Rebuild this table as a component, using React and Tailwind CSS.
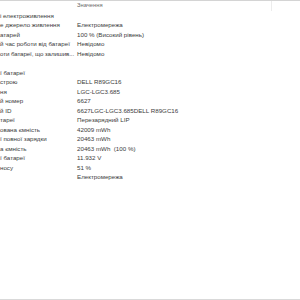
export default function App() {
  const rows = [
    ["і електроживлення", ""],
    ["е джерело живлення", "Електромережа"],
    ["атарей", "100 % (Високий рівень)"],
    ["й час роботи від батареї", "Невідомо"],
    ["оти батареї, що залишив...", "Невідомо"],
    ["", ""],
    ["ї батареї", ""],
    ["строю", "DELL R89GC16"],
    ["ня", "LGC-LGC3.685"],
    ["й номер", "6627"],
    ["й ID", "6627LGC-LGC3.685DELL R89GC16"],
    ["тареї", "Перезарядний LIP"],
    ["ована ємність", "42009 mWh"],
    ["ї повної зарядки", "20463 mWh"],
    ["а ємність", "20463 mWh  (100 %)"],
    ["ї батареї", "11.932 V"],
    ["носу", "51 %"],
    ["", "Електромережа"],
  ];
  return (
    <div
      className="w-[300px] h-[300px] bg-white overflow-hidden flex flex-col text-[#3c3c3c]"
      style={{ fontFamily: '"Liberation Sans", Arial, sans-serif' }}
    >
      <div className="h-px bg-[#d4d4d4] shrink-0" />
      <div className="h-[10px] shrink-0 flex items-center text-[5.8px] text-[#6b6b6b] leading-none relative">
        <div className="w-[77px] shrink-0" />
        <div>Значення</div>
        <div className="absolute left-[271px] top-0 w-px h-[10px] bg-[#ececec]" />
      </div>
      {rows.map(([l, v], i) => (
        <div key={i} className="h-[9.5px] shrink-0 flex items-center text-[6.2px] leading-none whitespace-pre">
          <div className="w-[77px] shrink-0">
            <span className={i === 4 ? "tracking-[-0.1px]" : ""}>{l}</span>
          </div>
          <div>{v}</div>
        </div>
      ))}
      <div className="flex-1" />
      <div className="h-px bg-[#d9d9d9] shrink-0" />
    </div>
  );
}
